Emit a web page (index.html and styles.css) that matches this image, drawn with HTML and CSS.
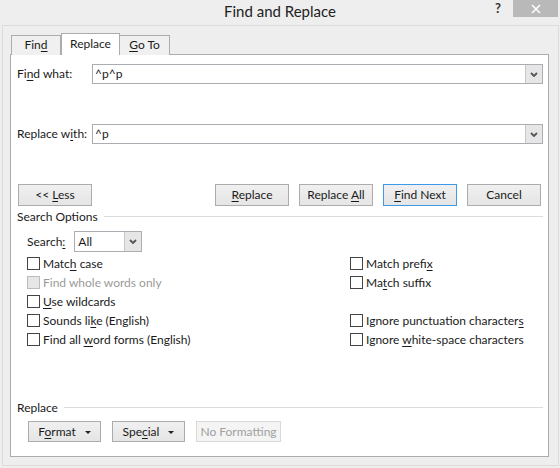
FILE: index.html
```html
<!DOCTYPE html>
<html lang="en">
  <head>
    <meta charset="UTF-8" />
    <meta name="viewport" content="width=device-width, initial-scale=1.0" />
    <title>Find and Replace</title>
    <link rel="stylesheet" href="styles.css">
  </head>
  <body>
    <div class="window">
      <header class="titlebar">
        <span></span>
        <h1 class="title">Find and Replace</h1>
        <div class="controls">
          <span class="help">?</span>
          <button class="close" aria-label="Close">
            <svg width="10" height="10" viewBox="0 0 10 10">
              <path d="M1 1 L9 9 M9 1 L1 9" stroke="#fff" stroke-width="1.6" fill="none" />
            </svg>
          </button>
        </div>
      </header>

      <div class="frame">
        <nav class="tabs">
          <div class="tab">Fin<u>d</u></div>
          <div class="tab active">Replace</div>
          <div class="tab"><u>G</u>o To</div>
        </nav>

        <section class="panel">
          <div class="field-row">
            <label class="field-label">Fi<u>n</u>d what:</label>
            <div class="combo flex-1">
              <span class="combo-text">^p^p</span>
              <span class="combo-arrow">
                <svg width="8" height="5" viewBox="0 0 8 5"><path d="M1 1 L4 4 L7 1" stroke="#555" stroke-width="1.8" fill="none" /></svg>
              </span>
            </div>
          </div>

          <div class="field-row second">
            <label class="field-label">Replace w<u>i</u>th:</label>
            <div class="combo flex-1">
              <span class="combo-text">^p</span>
              <span class="combo-arrow">
                <svg width="8" height="5" viewBox="0 0 8 5"><path d="M1 1 L4 4 L7 1" stroke="#555" stroke-width="1.8" fill="none" /></svg>
              </span>
            </div>
          </div>

          <div class="action-row">
            <button class="btn">&lt;&lt; <u>L</u>ess</button>
            <div class="action-group">
              <button class="btn"><u>R</u>eplace</button>
              <button class="btn">Replace <u>A</u>ll</button>
              <button class="btn focused"><u>F</u>ind Next</button>
              <button class="btn">Cancel</button>
            </div>
          </div>

          <div class="group-heading">
            <span>Search Options</span>
            <span class="rule"></span>
          </div>

          <div class="search-row">
            <label>Search<u>:</u></label>
            <div class="combo select">
              <span class="combo-text">All</span>
              <span class="combo-arrow">
                <svg width="8" height="5" viewBox="0 0 8 5"><path d="M1 1 L4 4 L7 1" stroke="#555" stroke-width="1.8" fill="none" /></svg>
              </span>
            </div>
          </div>

          <div class="options">
            <label class="check"><span class="box"></span><span>Matc<u>h</u> case</span></label>
            <label class="check"><span class="box"></span><span>Match prefi<u>x</u></span></label>
            <label class="check disabled"><span class="box"></span><span>Find whole words only</span></label>
            <label class="check"><span class="box"></span><span>Ma<u>t</u>ch suffix</span></label>
            <label class="check"><span class="box"></span><span><u>U</u>se wildcards</span></label>
            <span></span>
            <label class="check"><span class="box"></span><span>Sounds li<u>k</u>e (English)</span></label>
            <label class="check"><span class="box"></span><span>Ignore punctuation character<u>s</u></span></label>
            <label class="check"><span class="box"></span><span>Find all <u>w</u>ord forms (English)</span></label>
            <label class="check"><span class="box"></span><span>Ignore <u>w</u>hite-space characters</span></label>
          </div>

          <div class="group-heading replace-heading">
            <span>Replace</span>
            <span class="rule"></span>
          </div>

          <div class="format-row">
            <button class="btn menu">F<u>o</u>rmat <span class="caret"></span></button>
            <button class="btn menu">Spe<u>c</u>ial <span class="caret"></span></button>
            <button class="btn wide" disabled>No Formatting</button>
          </div>
        </section>
      </div>
    </div>
  </body>
</html>
```

FILE: styles.css
```css
* {
  box-sizing: border-box;
}

body {
  margin: 0;
  font-family: Lato, "Noto Sans", sans-serif;
  font-size: 12px;
  color: #1a1a1a;
  background-color: #eeeeee;
}

u {
  text-underline-offset: 2px;
}

.window {
  width: 560px;
  height: 468px;
  display: flex;
  flex-direction: column;
}

/* title bar */
.titlebar {
  height: 25px;
  display: grid;
  grid-template-columns: 1fr auto 1fr;
}

.title {
  margin: 0;
  font-weight: normal;
  font-size: 15px;
  line-height: 22px;
  color: #222;
}

.controls {
  justify-self: end;
  display: flex;
  align-items: flex-start;
}

.help {
  font-weight: bold;
  font-size: 13px;
  line-height: 14px;
  margin-top: 1px;
  margin-right: 12px;
  color: #333;
}

.close {
  width: 45px;
  height: 17px;
  margin-right: 2px;
  border: 0;
  padding: 0;
  background: #b9b9b9;
  display: flex;
  align-items: center;
  justify-content: center;
}

/* frame + tabs */
.frame {
  margin: 0 1px 2px 2px;
  flex: 1;
  border: 1px solid #dcdcdc;
  padding: 7px 9px 8px 7px;
  display: flex;
  flex-direction: column;
}

.tabs {
  display: flex;
  align-items: flex-end;
  padding-left: 1px;
  height: 22px;
  margin-bottom: -1px;
  position: relative;
  z-index: 1;
}

.tab {
  height: 20px;
  width: 50px;
  border: 1px solid #acacac;
  border-bottom: 0;
  background: #f0f0f0;
  text-align: center;
  line-height: 18px;
}

.tab + .tab {
  border-left: 0;
}

.tab.active {
  height: 22px;
  width: 59px;
  background: #fff;
  border-left: 1px solid #acacac;
  line-height: 19px;
}

.tab.active + .tab {
  border-left: 0;
}

.panel {
  flex: 1;
  background: #fff;
  border: 1px solid #acacac;
  padding: 9px 5px 0 6px;
  display: flex;
  flex-direction: column;
}

/* text fields */
.field-row {
  display: flex;
  align-items: center;
  height: 20px;
}

.field-row.second {
  margin-top: 40px;
}

.field-label {
  width: 75px;
  margin-top: -1px;
}

.flex-1 {
  flex: 1;
}

.combo {
  height: 20px;
  border: 1px solid #abadb3;
  display: flex;
  align-items: center;
  background: #fff;
}

.combo-text {
  flex: 1;
  padding-left: 2px;
  margin-top: -1px;
}

.combo-arrow {
  width: 17px;
  height: 18px;
  background: #e6e6e6;
  border-left: 1px solid #c8c8c8;
  display: flex;
  align-items: center;
  justify-content: center;
}

/* buttons */
.action-row {
  margin-top: 40px;
  display: flex;
  justify-content: space-between;
  padding: 0 2px 0 1px;
}

.action-group {
  display: flex;
  gap: 10px;
}

.btn {
  font: inherit;
  color: #1a1a1a;
  width: 74px;
  height: 22px;
  padding: 0 0 1px;
  border: 1px solid #acacac;
  background: linear-gradient(#f0f0f0, #e5e5e5);
}

.btn.focused {
  border-color: #3c9ae8;
}

.btn:disabled {
  color: #a0a0a0;
  background: #f4f4f4;
  border-color: #d9d9d9;
}

/* group headings */
.group-heading {
  margin-top: 3px;
  height: 15px;
  display: flex;
  align-items: center;
  gap: 6px;
}

.group-heading span:first-child {
  margin-top: -1px;
}

.rule {
  flex: 1;
  height: 1px;
  background: #dcdcdc;
}

.search-row {
  margin-top: 7px;
  padding-left: 10px;
  display: flex;
  align-items: center;
  gap: 9px;
}

.select {
  width: 68px;
  height: 21px;
}

.select .combo-text {
  padding-left: 3px;
}

.select .combo-arrow {
  height: 19px;
}

/* checkboxes */
.options {
  margin-top: 2px;
  padding-left: 10px;
  display: grid;
  grid-template-columns: 323px 1fr;
  grid-auto-rows: 19px;
}

.check {
  display: flex;
  align-items: center;
  gap: 3px;
}

.check span:last-child {
  margin-top: -1px;
}

.box {
  width: 13px;
  height: 13px;
  border: 1px solid #444;
  background: #fff;
}

.check.disabled {
  color: #9a9a9a;
}

.check.disabled .box {
  border-color: #bcbcbc;
  background: #e6e6e6;
}

.replace-heading {
  margin-top: 51px;
}

.format-row {
  margin-top: 6px;
  padding-left: 11px;
  display: flex;
  gap: 11px;
}

.format-row .btn {
  width: 73px;
  height: 21px;
}

.format-row .btn.wide {
  width: 85px;
}

.caret {
  display: inline-block;
  margin-left: 6px;
  vertical-align: middle;
  border-left: 3px solid transparent;
  border-right: 3px solid transparent;
  border-top: 3px solid #222;
}
```
